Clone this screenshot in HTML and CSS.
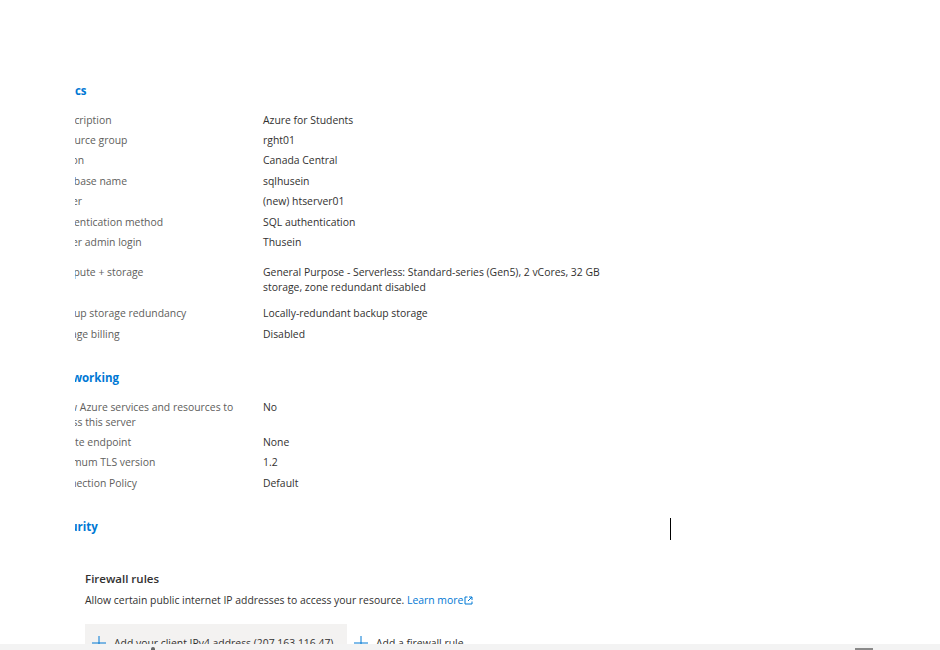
FILE: index.html
```html
<!DOCTYPE html>
<html lang="en">
<head>
<meta charset="utf-8">
<title>Review + create</title>
<link rel="stylesheet" href="styles.css">
</head>
<body>
<div class="screen">
  <div class="main">
    <div class="clip">
    <div class="content">
      <section class="section">
        <h2 class="heading">Basics</h2>
        <div class="row"><div class="label">Subscription</div><div class="value">Azure for Students</div></div>
        <div class="row"><div class="label">Resource group</div><div class="value">rght01</div></div>
        <div class="row"><div class="label">Region</div><div class="value">Canada Central</div></div>
        <div class="row"><div class="label">Database name</div><div class="value">sqlhusein</div></div>
        <div class="row"><div class="label">Server</div><div class="value">(new) htserver01</div></div>
        <div class="row"><div class="label">Authentication method</div><div class="value">SQL authentication</div></div>
        <div class="row"><div class="label">Server admin login</div><div class="value">Thusein</div></div>
        <div class="row row-wide"><div class="label">Compute + storage</div><div class="value">General Purpose - Serverless: Standard-series (Gen5), 2 vCores, 32 GB storage, zone redundant disabled</div></div>
        <div class="row"><div class="label">Backup storage redundancy</div><div class="value">Locally-redundant backup storage</div></div>
        <div class="row"><div class="label">Storage billing</div><div class="value">Disabled</div></div>
      </section>

      <section class="section">
        <h2 class="heading">Networking</h2>
        <div class="row"><div class="label">Allow Azure services and resources to access this server</div><div class="value">No</div></div>
        <div class="row"><div class="label">Private endpoint</div><div class="value">None</div></div>
        <div class="row"><div class="label">Minimum TLS version</div><div class="value">1.2</div></div>
        <div class="row"><div class="label">Connection Policy</div><div class="value">Default</div></div>
      </section>

      <section class="section">
        <h2 class="heading">Security</h2>
        <div class="firewall">
          <h3 class="fw-title">Firewall rules</h3>
          <p class="fw-desc">Allow certain public internet IP addresses to access your resource. <a class="link" href="#">Learn more<svg class="ext" width="9" height="9" viewBox="0 0 9 9"><path d="M3.5 1H1v7h7V5.5" fill="none" stroke="#0078d4" stroke-width="1"/><path d="M5 1h3v3M8 1 4 5" fill="none" stroke="#0078d4" stroke-width="1"/></svg></a></p>
          <div class="actions">
            <button class="btn btn-gray"><svg class="plus" width="14" height="14" viewBox="0 0 14 14"><path d="M7 0v14M0 7h14" stroke="#0078d4" stroke-width="1"/></svg>Add your client IPv4 address (207.163.116.47)</button>
            <button class="btn"><svg class="plus" width="14" height="14" viewBox="0 0 14 14"><path d="M7 0v14M0 7h14" stroke="#0078d4" stroke-width="1"/></svg>Add a firewall rule</button>
          </div>
        </div>
      </section>
    </div>
    </div>
    <span class="caret"></span>
  </div>
  <div class="footer"><span class="foot-mark"></span><span class="foot-thumb"></span></div>
</div>
</body>
</html>
```

FILE: styles.css
```css
* { box-sizing: border-box; }
html, body { margin: 0; padding: 0; background: #fff; }
body {
  font-family: "Open Sans", "Liberation Sans", sans-serif;
  font-size: 10.4px;
  color: #323130;
}
.screen {
  width: 940px;
  height: 650px;
  display: flex;
  flex-direction: column;
  overflow: hidden;
}
.main {
  position: relative;
  flex: 1;
  overflow: hidden;
}
.clip {
  margin-left: 75px;
  height: 100%;
  overflow: hidden;
}
.content {
  margin-left: -24px;
  width: 800px;
  padding-top: 82px;
}
.section + .section { margin-top: 24.5px; }
.heading {
  margin: 0 0 10px 0;
  font-size: 11.5px;
  font-weight: 700;
  line-height: 18px;
  color: #0078d4;
}
.row {
  display: grid;
  grid-template-columns: 212px 345px;
  line-height: 15px;
  padding: 2.7px 0;
}
.row-wide { margin-top: 10px; margin-bottom: 5.7px; }
.label { color: #605e5c; padding-right: 24px; }
.value { color: #323130; }
.firewall { padding-left: 34px; padding-top: 24px; }
.fw-title {
  margin: 0;
  font-size: 11.5px;
  font-weight: 600;
  line-height: 18px;
  color: #323130;
}
.fw-desc {
  margin: 4px 0 0 0;
  line-height: 16px;
  color: #323130;
}
.link { color: #0078d4; text-decoration: none; }
.ext { margin-left: 1px; vertical-align: -1px; }
.actions { display: flex; margin-top: 16px; }
.btn {
  display: flex;
  align-items: center;
  gap: 8px;
  height: 32px;
  padding: 0 7px;
  border: none;
  background: transparent;
  font: inherit;
  font-size: 10.4px;
  color: #323130;
  padding-top: 7px;
}
.btn-gray { background: #f3f2f1; width: 262px; }
.caret {
  position: absolute;
  left: 670px;
  top: 518px;
  width: 1px;
  height: 22px;
  background: #000;
}
.footer {
  position: relative;
  height: 6px;
  background: #f3f3f3;
}
.foot-mark {
  position: absolute;
  left: 151px;
  top: 3px;
  width: 4px;
  height: 3px;
  background: #666;
  border-radius: 2px 2px 0 0;
}
.foot-thumb {
  position: absolute;
  left: 855px;
  top: 4px;
  width: 18px;
  height: 2px;
  background: #8a8a8a;
}
```
